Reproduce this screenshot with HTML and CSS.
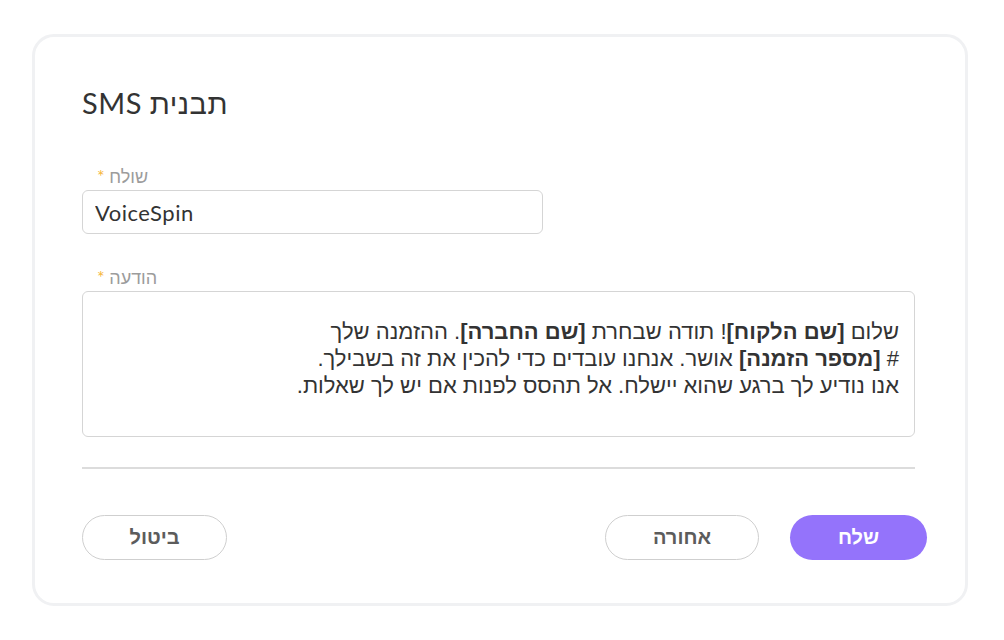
FILE: index.html
```html
<!DOCTYPE html>
<html lang="he">
<head>
    <meta charset="UTF-8">
    <meta name="viewport" content="width=device-width, initial-scale=1.0">
    <title>תבנית SMS</title>
    <link rel="stylesheet" href="styles.css">
</head>
<body>
    <div class="card">
        <h1 class="card-title" dir="rtl">תבנית SMS</h1>

        <div class="field">
            <label class="field-label" dir="rtl" for="sender">שולח <span class="required">*</span></label>
            <input class="text-input" type="text" id="sender" value="VoiceSpin">
        </div>

        <div class="field">
            <label class="field-label" dir="rtl">הודעה <span class="required">*</span></label>
            <div class="message-box" dir="rtl">
                שלום <b>[שם הלקוח]</b>! תודה שבחרת <b>[שם החברה]</b>. ההזמנה שלך<br>
                # <b>[מספר הזמנה]</b> אושר. אנחנו עובדים כדי להכין את זה בשבילך.<br>
                אנו נודיע לך ברגע שהוא יישלח. אל תהסס לפנות אם יש לך שאלות.
            </div>
        </div>

        <hr class="divider">

        <div class="actions">
            <button class="btn btn-outline">ביטול</button>
            <div class="actions-right">
                <button class="btn btn-outline btn-back">אחורה</button>
                <button class="btn btn-primary">שלח</button>
            </div>
        </div>
    </div>
</body>
</html>
```

FILE: styles.css
```css
body {
    margin: 0;
    background: #fff;
    font-family: Lato, "Liberation Sans", sans-serif;
    color: #333;
}
.card {
    box-sizing: border-box;
    width: 936px;
    height: 572px;
    margin: 34px 0 0 32px;
    padding: 48px 47px 0;
    border: 3px solid #f0f1f3;
    border-radius: 22px;
}
.card-title {
    margin: 0 0 44px;
    font-size: 29px;
    font-weight: 400;
    line-height: 36px;
    letter-spacing: 0.5px;
    text-align: left;
    color: #333;
}
.field + .field {
    margin-top: 32px;
}
.field-label {
    display: block;
    padding-left: 15px;
    margin-bottom: 3px;
    font-size: 18px;
    line-height: 22px;
    color: #9c9c9c;
    text-align: left;
}
.required {
    color: #f6b73c;
}
.text-input {
    box-sizing: border-box;
    display: block;
    width: 461px;
    height: 44px;
    padding: 0 12px;
    border: 1.5px solid #d5d5d5;
    border-radius: 6px;
    font-family: Lato, "Liberation Sans", sans-serif;
    font-size: 22px;
    letter-spacing: 0.5px;
    color: #333;
    outline: none;
}
.message-box {
    box-sizing: border-box;
    width: 833px;
    height: 146px;
    padding: 26px 15px 0;
    border: 1.5px solid #d5d5d5;
    border-radius: 6px;
    font-family: "Liberation Sans", sans-serif;
    font-size: 22px;
    line-height: 27px;
    color: #333;
}
.divider {
    width: 833px;
    margin: 30px 0 0;
    border: 0;
    border-top: 2px solid #dcdcdc;
}
.actions {
    display: flex;
    justify-content: space-between;
    width: 845px;
    margin-top: 46px;
}
.actions-right {
    display: flex;
    gap: 31px;
}
.btn {
    box-sizing: border-box;
    height: 45px;
    border-radius: 23px;
    font-family: "Liberation Sans", sans-serif;
    font-size: 20px;
    font-weight: 700;
    cursor: pointer;
}
.btn-outline {
    width: 145px;
    background: #fff;
    border: 1.5px solid #cfcfcf;
    color: #5c5c5c;
}
.btn-back {
    width: 154px;
}
.btn-primary {
    width: 137px;
    background: #9473fb;
    border: 0;
    color: #fff;
}
```
